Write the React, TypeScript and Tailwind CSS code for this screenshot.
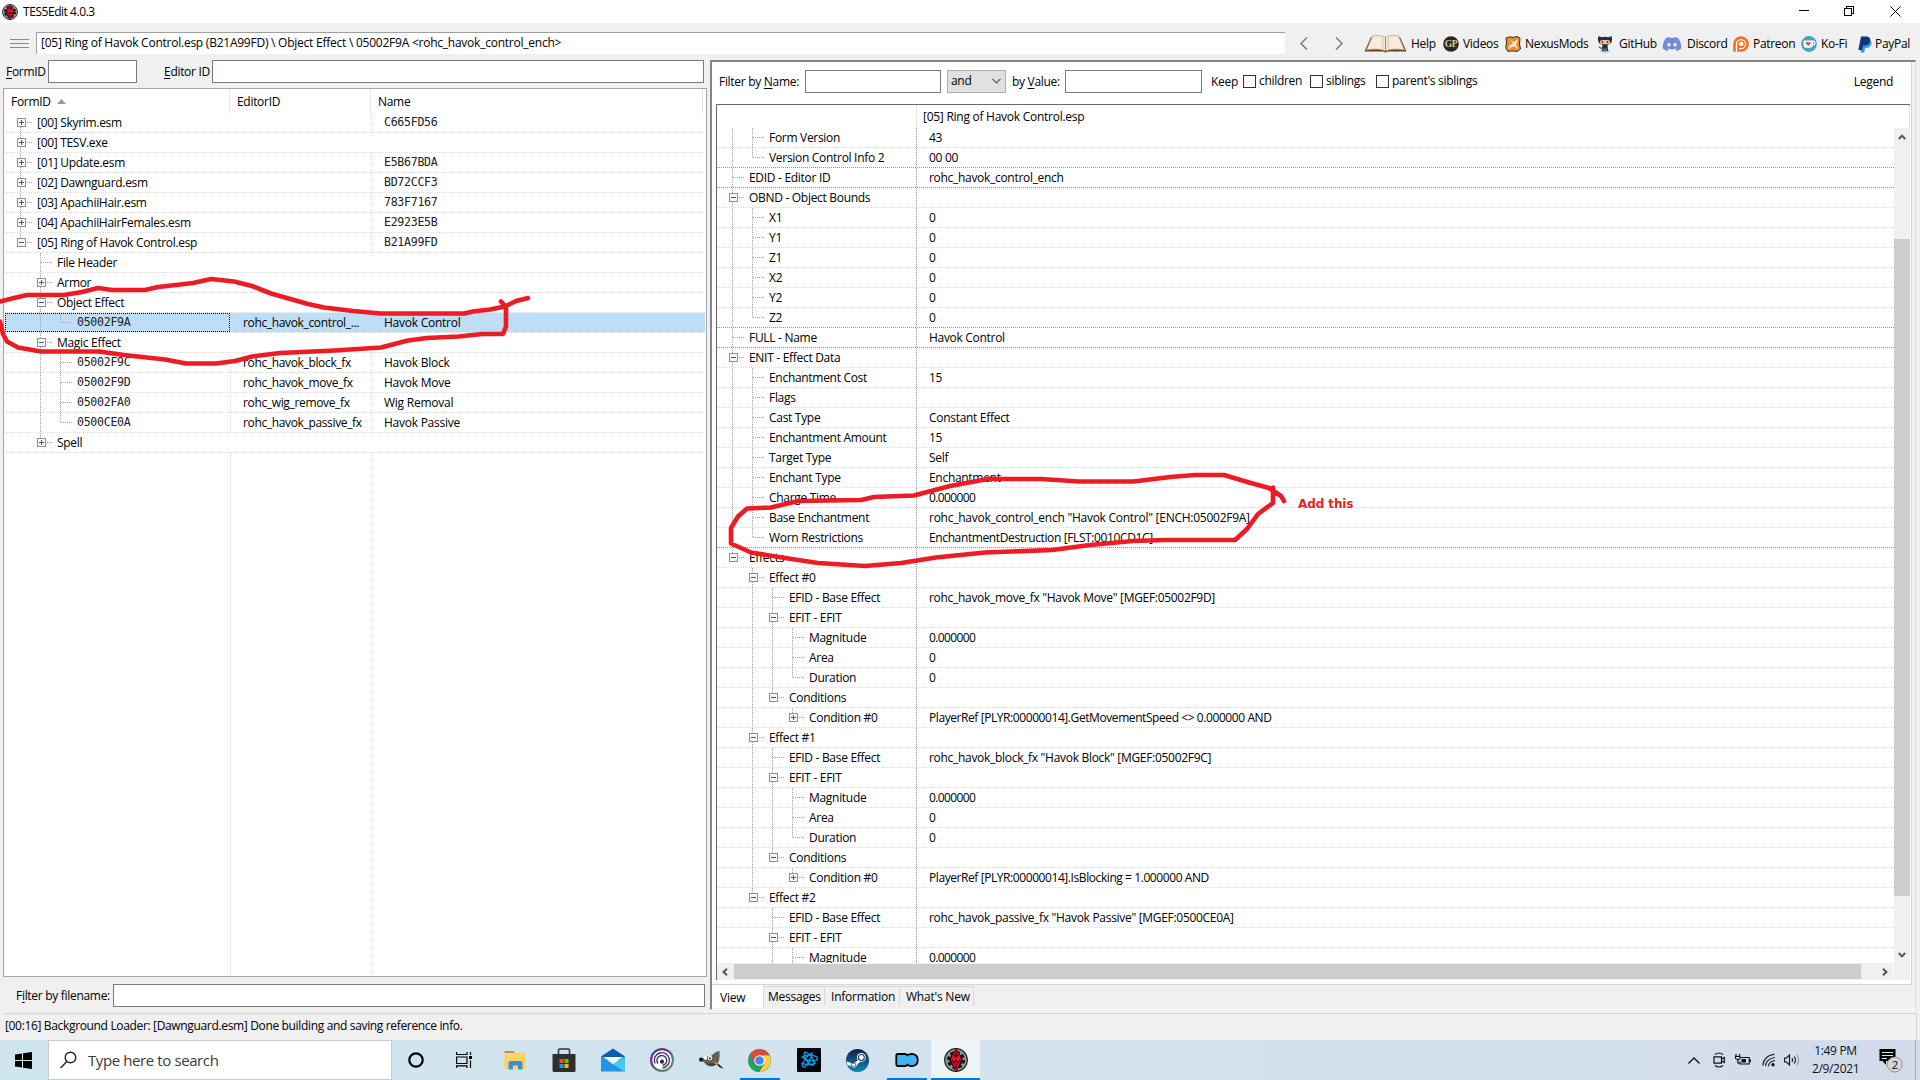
import type { ReactNode } from 'react';
import { FaDiscord } from 'react-icons/fa';

type Kind = 'leaf' | 'plus' | 'minus';

type TreeRow = {
  level: number;
  kind: Kind;
  label: string;
  value?: string;
  editor?: string;
  mono?: boolean;
  selected?: boolean;
  dark?: boolean;
};

const pluginRows: TreeRow[] = [
  { level: 0, kind: 'plus', label: '[00] Skyrim.esm', value: 'C665FD56' },
  { level: 0, kind: 'plus', label: '[00] TESV.exe' },
  { level: 0, kind: 'plus', label: '[01] Update.esm', value: 'E5B67BDA' },
  { level: 0, kind: 'plus', label: '[02] Dawnguard.esm', value: 'BD72CCF3' },
  { level: 0, kind: 'plus', label: '[03] ApachiiHair.esm', value: '783F7167' },
  { level: 0, kind: 'plus', label: '[04] ApachiiHairFemales.esm', value: 'E2923E5B' },
  { level: 0, kind: 'minus', label: '[05] Ring of Havok Control.esp', value: 'B21A99FD' },
  { level: 1, kind: 'leaf', label: 'File Header' },
  { level: 1, kind: 'plus', label: 'Armor' },
  { level: 1, kind: 'minus', label: 'Object Effect' },
  { level: 2, kind: 'leaf', label: '05002F9A', editor: 'rohc_havok_control_...', value: 'Havok Control', mono: true, selected: true },
  { level: 1, kind: 'minus', label: 'Magic Effect' },
  { level: 2, kind: 'leaf', label: '05002F9C', editor: 'rohc_havok_block_fx', value: 'Havok Block', mono: true },
  { level: 2, kind: 'leaf', label: '05002F9D', editor: 'rohc_havok_move_fx', value: 'Havok Move', mono: true },
  { level: 2, kind: 'leaf', label: '05002FA0', editor: 'rohc_wig_remove_fx', value: 'Wig Removal', mono: true },
  { level: 2, kind: 'leaf', label: '0500CE0A', editor: 'rohc_havok_passive_fx', value: 'Havok Passive', mono: true },
  { level: 1, kind: 'plus', label: 'Spell' },
];

const recordRows: TreeRow[] = [
  { level: 1, kind: 'leaf', label: 'Form Version', value: '43' },
  { level: 1, kind: 'leaf', label: 'Version Control Info 2', value: '00 00', dark: true },
  { level: 0, kind: 'leaf', label: 'EDID - Editor ID', value: 'rohc_havok_control_ench', dark: true },
  { level: 0, kind: 'minus', label: 'OBND - Object Bounds' },
  { level: 1, kind: 'leaf', label: 'X1', value: '0' },
  { level: 1, kind: 'leaf', label: 'Y1', value: '0' },
  { level: 1, kind: 'leaf', label: 'Z1', value: '0' },
  { level: 1, kind: 'leaf', label: 'X2', value: '0' },
  { level: 1, kind: 'leaf', label: 'Y2', value: '0' },
  { level: 1, kind: 'leaf', label: 'Z2', value: '0', dark: true },
  { level: 0, kind: 'leaf', label: 'FULL - Name', value: 'Havok Control', dark: true },
  { level: 0, kind: 'minus', label: 'ENIT - Effect Data' },
  { level: 1, kind: 'leaf', label: 'Enchantment Cost', value: '15' },
  { level: 1, kind: 'leaf', label: 'Flags' },
  { level: 1, kind: 'leaf', label: 'Cast Type', value: 'Constant Effect' },
  { level: 1, kind: 'leaf', label: 'Enchantment Amount', value: '15' },
  { level: 1, kind: 'leaf', label: 'Target Type', value: 'Self' },
  { level: 1, kind: 'leaf', label: 'Enchant Type', value: 'Enchantment' },
  { level: 1, kind: 'leaf', label: 'Charge Time', value: '0.000000' },
  { level: 1, kind: 'leaf', label: 'Base Enchantment', value: 'rohc_havok_control_ench "Havok Control" [ENCH:05002F9A]' },
  { level: 1, kind: 'leaf', label: 'Worn Restrictions', value: 'EnchantmentDestruction [FLST:0010CD1C]', dark: true },
  { level: 0, kind: 'minus', label: 'Effects' },
  { level: 1, kind: 'minus', label: 'Effect #0' },
  { level: 2, kind: 'leaf', label: 'EFID - Base Effect', value: 'rohc_havok_move_fx "Havok Move" [MGEF:05002F9D]' },
  { level: 2, kind: 'minus', label: 'EFIT - EFIT' },
  { level: 3, kind: 'leaf', label: 'Magnitude', value: '0.000000' },
  { level: 3, kind: 'leaf', label: 'Area', value: '0' },
  { level: 3, kind: 'leaf', label: 'Duration', value: '0' },
  { level: 2, kind: 'minus', label: 'Conditions' },
  { level: 3, kind: 'plus', label: 'Condition #0', value: 'PlayerRef [PLYR:00000014].GetMovementSpeed <> 0.000000 AND' },
  { level: 1, kind: 'minus', label: 'Effect #1' },
  { level: 2, kind: 'leaf', label: 'EFID - Base Effect', value: 'rohc_havok_block_fx "Havok Block" [MGEF:05002F9C]' },
  { level: 2, kind: 'minus', label: 'EFIT - EFIT' },
  { level: 3, kind: 'leaf', label: 'Magnitude', value: '0.000000' },
  { level: 3, kind: 'leaf', label: 'Area', value: '0' },
  { level: 3, kind: 'leaf', label: 'Duration', value: '0' },
  { level: 2, kind: 'minus', label: 'Conditions' },
  { level: 3, kind: 'plus', label: 'Condition #0', value: 'PlayerRef [PLYR:00000014].IsBlocking = 1.000000 AND' },
  { level: 1, kind: 'minus', label: 'Effect #2' },
  { level: 2, kind: 'leaf', label: 'EFID - Base Effect', value: 'rohc_havok_passive_fx "Havok Passive" [MGEF:0500CE0A]' },
  { level: 2, kind: 'minus', label: 'EFIT - EFIT' },
  { level: 3, kind: 'leaf', label: 'Magnitude', value: '0.000000' },
  { level: 3, kind: 'leaf', label: 'Area', value: '0' },
  { level: 2, kind: 'leaf', label: 'Conditions' },
];

const VISIBLE_RECORD_ROWS = 42;

// true when another node on the same level follows before the branch closes
const continues = (rows: TreeRow[], index: number, level: number) => {
  for (let i = index + 1; i < rows.length; i++) {
    if (rows[i].level < level) return false;
    if (rows[i].level === level) return true;
  }
  return false;
};

const valueTracking = (value?: string) => {
  if (!value) return '';
  if (/^[\d.]{4,}$/.test(value)) return 'tracking-[-0.6px]';
  if (value.startsWith('PlayerRef')) return 'tracking-[-0.42px]';
  if (value.startsWith('EnchantmentD')) return 'tracking-[-0.38px]';
  if (value.includes('ench "')) return 'tracking-[-0.26px]';
  return '';
};

const Guides = ({ rows, index, scrolled }: { rows: TreeRow[]; index: number; scrolled?: boolean }) => {
  const { level, kind } = rows[index];
  const first = index === 0 && !scrolled;
  return (
    <>
      {Array.from({ length: level + 1 }, (_, l) => {
        const more = continues(rows, index, l);
        const own = l === level;
        return (
          <svg key={l} className="h-5 w-5 shrink-0" viewBox="0 0 20 20" shapeRendering="crispEdges">
            {!own && more && <path d="M3.5 0V20" stroke="#a0a0a0" strokeDasharray="1 1" />}
            {own && (
              <>
                {!first && <path d="M3.5 0V10" stroke="#a0a0a0" strokeDasharray="1 1" />}
                {more && <path d="M3.5 10V20" stroke="#a0a0a0" strokeDasharray="1 1" />}
                <path d="M4 9.5H16" stroke="#a0a0a0" strokeDasharray="1 1" />
                {kind !== 'leaf' && (
                  <>
                    <rect x="0.5" y="5.5" width="8" height="8" fill="#f6f6f6" stroke="#919191" />
                    <path d="M2 9.5H7" stroke="#3c57a4" />
                    {kind === 'plus' && <path d="M4.5 7V12" stroke="#3c57a4" />}
                  </>
                )}
              </>
            )}
          </svg>
        );
      })}
    </>
  );
};

const dotsLight = 'bg-[repeating-linear-gradient(to_right,#dfdfdf_0_1px,transparent_1px_2px)]';
const dotsDark = 'bg-[repeating-linear-gradient(to_right,#959595_0_1px,transparent_1px_2px)]';
const vDotsLight = 'bg-[repeating-linear-gradient(to_bottom,#dfdfdf_0_1px,transparent_1px_2px)]';
const vDotsDark = 'bg-[repeating-linear-gradient(to_bottom,#959595_0_1px,transparent_1px_2px)]';

const PluginTree = () => (
  <div className="ml-[3px] flex h-[889px] w-[704px] flex-col border border-[#a3a6ad] bg-white">
    <div className="flex h-6 items-center">
      <div className="flex h-full w-[226px] items-center border-r border-[#e5e5e5] pt-0.5 pl-[7px]">
        FormID
        <svg className="mb-0.5 ml-[6px] h-[5px] w-[9px]" viewBox="0 0 9 5">
          <path d="M4.5 0L9 5H0Z" fill="#999" />
        </svg>
      </div>
      <div className="flex h-full w-[141px] items-center border-r border-[#e5e5e5] pt-0.5 pl-[7px]">EditorID</div>
      <div className="flex h-full w-[332px] items-center border-r border-[#e5e5e5] pt-0.5 pl-[7px]">Name</div>
    </div>
    {pluginRows.map((row, i) => (
      <div key={i} className="ml-px h-5 w-[700px]">
        <div className={`flex h-[19px] ${row.selected ? 'bg-[#bfddf5]' : ''}`}>
          <div className={`flex w-[225px] pl-3 ${row.selected ? 'outline-1 -outline-offset-1 outline-dotted outline-black' : ''}`}>
            <Guides rows={pluginRows} index={i} />
            <span
              className={
                row.mono ? 'font-[DejaVu_Sans_Mono,monospace] text-[11.6px] leading-[19px] text-[#222]' : 'leading-5'
              }
            >
              {row.label}
            </span>
          </div>
          <div className={`w-px ${row.editor ? vDotsLight : ''}`} />
          <div className="w-[140px] pl-3 leading-5 tracking-[-0.35px]">{row.editor}</div>
          <div className={`w-px ${row.value ? vDotsLight : ''}`} />
          <div
            className={
              row.level === 0
                ? 'pl-3 font-[DejaVu_Sans_Mono,monospace] text-[11.6px] leading-[19px] text-[#222]'
                : 'pl-3 leading-5 tracking-[-0.25px]'
            }
          >
            {row.value}
          </div>
        </div>
        <div className={`h-px ${dotsLight}`} />
      </div>
    ))}
    <div className="flex flex-1 pl-[226px]">
      <div className={`w-px ${vDotsLight}`} />
      <div className={`ml-[140px] w-px ${vDotsLight}`} />
    </div>
  </div>
);

const RecordTree = () => (
  <div className="ml-1 flex h-[876px] w-[1194px] flex-col border-t border-l border-[#696969]">
    <div className="flex h-[23px] shrink-0">
      <div className="w-[200px] border-r border-[#e5e5e5]" />
      <div className="flex-1 border-r border-[#e5e5e5] pt-px pl-1.5 leading-[22px] tracking-[-0.26px]">[05] Ring of Havok Control.esp</div>
    </div>
    <div className="flex h-[835px] shrink-0">
      <div className="h-full w-[1177px] overflow-hidden">
        {recordRows.slice(0, VISIBLE_RECORD_ROWS).map((row, i) => (
          <div key={i} className="h-5">
            <div className="flex h-[19px]">
              <div className="flex w-[199px] pl-3">
                <Guides rows={recordRows} index={i} scrolled />
                <span className="leading-5 whitespace-nowrap">{row.label}</span>
              </div>
              <div className={`h-5 w-px ${vDotsDark}`} />
              <div className={`pl-3 leading-5 whitespace-pre ${valueTracking(row.value)}`}>{row.value}</div>
            </div>
            <div className={`h-px ${row.dark ? dotsDark : dotsLight}`} />
          </div>
        ))}
      </div>
      <div className="flex w-4 flex-col items-center bg-[#f0f0f0]">
        <svg className="mt-1.5 h-[7px] w-2" viewBox="0 0 8 7">
          <path d="M0.8 5L4 1.6L7.2 5" fill="none" stroke="#555" strokeWidth="2" />
        </svg>
        <div className="mt-[98px] h-[657px] w-4 bg-[#cdcdcd]" />
        <svg className="mt-auto mb-[5px] h-[7px] w-2" viewBox="0 0 8 7">
          <path d="M0.8 2L4 5.4L7.2 2" fill="none" stroke="#555" strokeWidth="2" />
        </svg>
      </div>
    </div>
    <div className="flex h-[17px] items-stretch">
      <div className="flex w-[1176px] items-center bg-[#f0f0f0]">
        <div className="flex w-[17px] justify-center">
          <svg className="h-2 w-[7px]" viewBox="0 0 7 8">
            <path d="M5 0.8L1.6 4L5 7.2" fill="none" stroke="#555" strokeWidth="2" />
          </svg>
        </div>
        <div className="h-[15px] w-[1127px] bg-[#cdcdcd]" />
        <svg className="mr-[5px] ml-auto h-2 w-[7px]" viewBox="0 0 7 8">
          <path d="M2 0.8L5.4 4L2 7.2" fill="none" stroke="#555" strokeWidth="2" />
        </svg>
      </div>
      <div className="ml-px w-4 bg-[#f0f0f0]" />
    </div>
  </div>
);

const DragonLogo = ({ className }: { className: string }) => (
  <svg className={className} viewBox="0 0 24 24">
    <circle cx="12" cy="12" r="11.3" fill="#8f9898" stroke="#222" strokeWidth="1.2" />
    <circle cx="12" cy="12" r="7.6" fill="none" stroke="#111" strokeWidth="3" strokeDasharray="3.4 2.57" />
    <circle cx="12" cy="12" r="6.8" fill="#1c1c1c" />
    <path d="M12 0.5L13.8 4L16 7L17.500 12L15 17L12.500 23.500H11.500L9 17L6.500 12L8 7L10.200 4Z" fill="#e8112d" stroke="#2a0008" strokeWidth="0.8" />
    <path d="M12 3V9L9.500 6.500M12 9L14.500 6.500M8 12L10.500 15L12 12L13.500 15L16 12M12 16V21" fill="none" stroke="#3c0008" strokeWidth="1.1" />
  </svg>
);

const BookIcon = () => (
  <svg className="h-[18px] w-[43px]" viewBox="0 0 43 18">
    <path d="M7 2L0.500 16.500H19L21.500 17.500L24 16.500H42.500L36 2Z" fill="#6b3e22" />
    <path d="M8.500 1C13 0 19 0.500 21.500 2.500C24 0.500 30 0 34.500 1L40.500 15C34 13.500 25 14 21.500 16C18 14 9 13.500 2.500 15Z" fill="#f6ebdc" stroke="#b59a80" strokeWidth="0.7" />
    <path d="M21.500 2.500V16" stroke="#a98262" strokeWidth="1" />
    <path d="M18.500 2C19.500 6 19 11 18.500 14M24.500 2C23.500 6 24 11 24.500 14" fill="none" stroke="#e2cfb6" strokeWidth="1.500" />
  </svg>
);

const GpIcon = () => (
  <svg className="h-4 w-4" viewBox="0 0 16 16">
    <circle cx="8" cy="8" r="7.800" fill="#2b2723" />
    <text x="8" y="11.200" textAnchor="middle" fontSize="9.500" fontWeight="bold" letterSpacing="-0.300" fontFamily="Liberation Serif, serif" fill="#dccb98">
      GP
    </text>
  </svg>
);

const NexusIcon = () => (
  <svg className="h-4 w-4" viewBox="0 0 16 16">
    <path d="M1 2L5 0.800L8 1.500L12 0.500L15 2L14.500 8L15.500 13L12 15.500L7 14.800L3 15.500L0.800 12L1.500 7Z" fill="#e8912b" stroke="#3a2c1c" strokeWidth="1" />
    <path d="M3 3L7 5.500L8 8L5 9L3 13L7 11L9 10L13 13L11 9L13 3L9 6Z" fill="#fff2dc" />
  </svg>
);

const OctocatIcon = () => (
  <svg className="h-[18px] w-4" viewBox="0 0 16 18">
    <ellipse cx="8" cy="16" rx="5" ry="1.700" fill="#9ed3e4" />
    <path d="M1.500 1L4.500 2.200Q8 1.300 11.500 2.200L14.500 1Q15.500 4 14.800 6Q14 10 8 10Q2 10 1.200 6Q0.500 4 1.500 1Z" fill="#2b2b33" />
    <rect x="3" y="5" width="10" height="4.200" rx="2" fill="#f1c9ad" />
    <ellipse cx="5.500" cy="7" rx="0.900" ry="1.300" fill="#6b3b2c" />
    <ellipse cx="10.500" cy="7" rx="0.900" ry="1.300" fill="#6b3b2c" />
    <path d="M5.500 9.500H10.500L11 16H9.300V13.500H8.600V16.500H7.400V13.500H6.700V16H5Z" fill="#2b2b33" />
    <path d="M5 13Q2.500 14 2 11.500" fill="none" stroke="#2b2b33" />
  </svg>
);

const PatreonIcon = () => (
  <svg className="h-4 w-4" viewBox="0 0 16 16">
    <path d="M0.200 16V8A7.800 7.800 0 1 1 8 15.800H0.200Z" fill="#f96d1c" />
    <path d="M2.800 16V8.100A5.200 5.200 0 1 1 8 13.300H6.200V16Z" fill="#fff" />
    <path d="M4.200 16V8.100A3.900 3.900 0 1 1 8.100 12H6V16Z" fill="#f96d1c" />
    <circle cx="8.200" cy="8" r="2.300" fill="#fff" />
  </svg>
);

const KofiIcon = () => (
  <svg className="h-4 w-4" viewBox="0 0 16 16">
    <circle cx="8" cy="8" r="7.900" fill="#4aa0bf" />
    <path d="M2.500 4.500H12Q14.500 4.500 14.500 7T12 9.300Q11.500 11.700 9.500 11.700H4.500Q2.500 11.700 2.500 9.500Z" fill="#fff" />
    <path d="M12 6V8Q13.300 8 13.300 7T12 6Z" fill="#4aa0bf" />
    <path d="M7.200 10L4.800 7.600Q4.200 6.200 5.500 5.900Q6.500 5.700 7.200 6.700Q7.900 5.700 8.900 5.900Q10.200 6.200 9.600 7.600Z" fill="#ee4b4b" />
  </svg>
);

const PaypalIcon = () => (
  <svg className="h-[17px] w-[14px]" viewBox="0 0 14 17">
    <path d="M4.500 4H12Q14.500 6 13 9Q11.500 12 8 12H7L6.200 16.500H2.500Z" fill="#2aa0e0" />
    <path d="M3 0.500H9Q12.800 1 12.200 5Q11.200 9.500 6.500 9.500H5L4 14H0.300Z" fill="#123577" />
  </svg>
);

const toolbarLinks: { label: string; icon: ReactNode; cls: string; gap: string }[] = [
  { label: 'Help', icon: <BookIcon />, cls: 'w-[79px]', gap: 'w-[47px]' },
  { label: 'Videos', icon: <GpIcon />, cls: 'w-[62px]', gap: 'w-5' },
  { label: 'NexusMods', icon: <NexusIcon />, cls: 'w-[92px]', gap: 'w-5' },
  { label: 'GitHub', icon: <OctocatIcon />, cls: 'w-[65px]', gap: 'w-[22px]' },
  { label: 'Discord', icon: <FaDiscord className="h-5 w-5 text-[#7289da]" />, cls: 'w-[71px]', gap: 'w-[25px]' },
  { label: 'Patreon', icon: <PatreonIcon />, cls: 'w-[68px]', gap: 'w-5' },
  { label: 'Ko-Fi', icon: <KofiIcon />, cls: 'w-[57px]', gap: 'w-5' },
  { label: 'PayPal', icon: <PaypalIcon />, cls: 'w-[55px]', gap: 'w-[17px]' },
];

const TitleBar = () => (
  <div className="flex h-[23px] items-center bg-white pl-0.5">
    <DragonLogo className="h-4 w-4" />
    <span className="ml-[5px] tracking-[-0.45px]">TES5Edit 4.0.3</span>
    <div className="mr-[19px] ml-auto flex items-center gap-[35px]">
      <svg className="h-[11px] w-[11px]" viewBox="0 0 11 11" shapeRendering="crispEdges">
        <path d="M1 4.500H11" stroke="#000" />
      </svg>
      <svg className="h-[11px] w-[11px]" viewBox="0 0 11 11" fill="none" stroke="#000" shapeRendering="crispEdges">
        <path d="M0.500 2.500H7.500V9.500H0.500ZM2.500 2.500V0.500H9.500V7.500H7.500" />
      </svg>
      <svg className="h-[11px] w-[11px]" viewBox="0 0 11 11" stroke="#000">
        <path d="M0.500 0.500L10.500 10.500M10.500 0.500L0.500 10.500" />
      </svg>
    </div>
  </div>
);

const Toolbar = () => (
  <div className="flex h-[37px] items-start">
    <svg className="mt-[15px] ml-[10px] h-[11px] w-[19px]" viewBox="0 0 19 11" stroke="#8a8a8a" shapeRendering="crispEdges">
      <path d="M0 1.500H19M0 5.500H19M0 9.500H19" />
    </svg>
    <div className="mt-[9px] ml-[7px] h-[22px] w-[1249px] border-t border-l border-[#a0a0a0] bg-white pl-1 leading-[19px] tracking-[-0.24px]">
      [05] Ring of Havok Control.esp (B21A99FD) \ Object Effect \ 05002F9A &lt;rohc_havok_control_ench&gt;
    </div>
    <svg className="mt-3.5 ml-[15px] h-[13px] w-2" viewBox="0 0 8 13" fill="none" stroke="#7b7380" strokeWidth="1.400">
      <path d="M7 0.500L1 6.500L7 12.500" />
    </svg>
    <svg className="mt-3.5 ml-[27px] h-[13px] w-2" viewBox="0 0 8 13" fill="none" stroke="#7b7380" strokeWidth="1.400">
      <path d="M1 0.500L7 6.500L1 12.500" />
    </svg>
    <div className="mt-[10px] ml-[21px] flex h-[22px] items-center">
      {toolbarLinks.map((link) => (
        <div key={link.label} className={`flex shrink-0 items-center ${link.cls}`}>
          <div className={`shrink-0 ${link.gap}`}>{link.icon}</div>
          <span className="whitespace-nowrap">{link.label}</span>
        </div>
      ))}
    </div>
  </div>
);

const Check = ({ label, cls }: { label: string; cls: string }) => (
  <div className={`flex shrink-0 items-center gap-[3px] ${cls}`}>
    <div className="h-[13px] w-[13px] border border-[#333] bg-white" />
    <span className="whitespace-nowrap">{label}</span>
  </div>
);

const FilterBar = () => (
  <div className="flex h-[42px] items-start pt-[7px] pl-[7px]">
    <div className="flex h-6 w-full items-center">
      <span className="w-[86px] pt-0.5 whitespace-nowrap">
        Filter by <u className="underline-offset-2">N</u>ame:
      </span>
      <div className="h-[23px] w-[136px] border border-[#7a7a7a] bg-white" />
      <div className="ml-1.5 flex h-[23px] w-[59px] items-center justify-between border border-[#adadad] bg-[#e1e1e1] pr-1 pl-[3px]">
        and
        <svg className="h-[6px] w-[9px]" viewBox="0 0 9 6" fill="none" stroke="#555" strokeWidth="1.200">
          <path d="M0.500 0.800L4.500 4.800L8.500 0.800" />
        </svg>
      </div>
      <span className="ml-1.5 w-[53px] pt-0.5 whitespace-nowrap">
        by <u className="underline-offset-2">V</u>alue:
      </span>
      <div className="h-[23px] w-[137px] border border-[#7a7a7a] bg-white" />
      <span className="ml-[9px] w-8 pt-0.5">Keep</span>
      <Check label="children" cls="w-[67px]" />
      <Check label="siblings" cls="w-[66px]" />
      <Check label="parent's siblings" cls="w-[110px]" />
      <span className="mr-[18px] ml-auto pt-0.5">Legend</span>
    </div>
  </div>
);

const tabs = [
  { label: 'Messages', cls: 'w-[61px] pl-1' },
  { label: 'Information', cls: 'w-[75px] pl-1.5' },
  { label: "What's New", cls: 'w-[74px] pl-1.5' },
];

const Annotations = () => (
  <svg
    className="pointer-events-none absolute inset-0 h-[1080px] w-[1920px]"
    viewBox="0 0 1920 1080"
    fill="none"
    stroke="#ed1c24"
    strokeWidth="4.600"
    strokeLinecap="round"
    strokeLinejoin="round"
  >
    <path d="M0 301.500L14 298L27 295H64L82 292L98 288L112 290H145L158 287L176 285L193 283L211 279L234 281.500L252 286L271 293.500L308 304L324 307.500L353 311L381 313.500H464L473 311.500L490 309.500L505 306.500L516 301L528 298" />
    <path d="M501 301.500L506 307V326.500L503 334H482L459 336.500L427 338L408 340.500L381 347.500L335 350.500L280 353L252 356.500L235 361L216 363.500H186L165 359.500L124 355L99 351.500H41L18 347.500L7 341.500L3 334L0 321.500" />
    <path d="M1284 501L1281 496L1269 488L1249 482.500L1224 475H1195L1170 477L1146 480L1133 481.500H1079L1041 479H988L950 486L914 495.500L874 497L861 500L798 501L771 507.500L747 508.500L738 516.500L731 528V543.500L751 552.500L785 558L818 563L865 566L901 563L936 557.500L985 552.500L1052 550L1090 545L1133 541L1165 540H1235L1247 529L1258 514L1273 503V487.500" />
  </svg>
);

const SearchIcon = () => (
  <svg className="h-[18px] w-[17px]" viewBox="0 0 17 18" fill="none" stroke="#222" strokeWidth="1.400">
    <circle cx="10.500" cy="6.500" r="5.300" />
    <path d="M6.800 10.500L0.600 17" />
  </svg>
);

const taskIcons: { icon: ReactNode; open?: boolean; active?: boolean }[] = [
  {
    icon: (
      <svg className="mr-0.5 h-4 w-4" viewBox="0 0 16 16">
        <circle cx="8" cy="8" r="6.700" fill="none" stroke="#000" strokeWidth="2.200" />
      </svg>
    ),
  },
  {
    icon: (
      <svg className="mr-1 h-4 w-4" viewBox="0 0 16 16" fill="none" stroke="#000" strokeWidth="1.200">
        <path d="M0.600 0V2.500H11V0M0.600 5H11V11.500H0.600ZM0.600 16V13.800H11V16M14.500 0V3M14.500 8.500V16" />
        <path d="M13 4H16V7H13Z" fill="#000" stroke="none" />
      </svg>
    ),
  },
  {
    icon: (
      <svg className="h-6 w-6" viewBox="0 0 24 24">
        <path d="M1.500 3H10.500L12 5H1.500Z" fill="#d98f0b" />
        <path d="M1.500 6.500H11L12.500 4.500H22.500V21H1.500Z" fill="#fcd462" />
        <path d="M5.500 21.500V15Q5.500 13 7.500 13H17.500Q19.500 13 19.500 15V21.500H15V17.500H10V21.500Z" fill="#3d8fd9" />
      </svg>
    ),
  },
  {
    icon: (
      <svg className="h-6 w-6" viewBox="0 0 24 24">
        <path d="M6.500 6V2Q6.500 1 7.500 1H16.500Q17.500 1 17.500 2V6" fill="none" stroke="#333" strokeWidth="1.500" />
        <path d="M0.500 6H23.500V22.500Q23.500 24 22 24H2Q0.500 24 0.500 22.500Z" fill="#2f2f2f" />
        <path d="M7.500 11H11.500V15H7.500Z" fill="#f25022" />
        <path d="M12.500 11H16.500V15H12.500Z" fill="#7fba00" />
        <path d="M7.500 16H11.500V20H7.500Z" fill="#00a4ef" />
        <path d="M12.500 16H16.500V20H12.500Z" fill="#ffb900" />
      </svg>
    ),
  },
  {
    icon: (
      <svg className="h-6 w-6" viewBox="0 0 24 24">
        <path d="M0 8.500L12 0.500L24 8.500V13H0Z" fill="#0a5fae" />
        <path d="M0 8.500L24 23.500H0Z" fill="#1e96e4" />
        <path d="M24 8.500V23.500L11.800 16Z" fill="#45c8f8" />
        <path d="M2 9H22L12 16Z" fill="#f4f6f8" />
      </svg>
    ),
  },
  {
    icon: (
      <svg className="h-6 w-6" viewBox="0 0 24 24" fill="none">
        <defs>
          <linearGradient id="swirl" x1="0" y1="0" x2="1" y2="1">
            <stop offset="0" stopColor="#2f4fa8" />
            <stop offset="0.350" stopColor="#7a2b7d" />
            <stop offset="0.650" stopColor="#2f8c86" />
            <stop offset="1" stopColor="#c07a2a" />
          </linearGradient>
        </defs>
        <circle cx="12" cy="12" r="12" fill="url(#swirl)" />
        <circle cx="12" cy="12" r="9.800" fill="#fff" />
        <path d="M5 15.500A7.600 7.600 0 1 1 12.500 19.800M8 15.500A4.900 4.900 0 1 1 12.500 17.300" stroke="#3a3560" strokeWidth="1.400" />
        <circle cx="12" cy="13.700" r="2.100" fill="#2c2c50" />
      </svg>
    ),
  },
  {
    icon: (
      <svg className="h-6 w-6" viewBox="0 0 24 24">
        <path d="M2 10Q6 11 9 8L12 8L14 6L18 3.500L20.500 3Q21 8 20 13Q18 18 12 18.500Q7 18 5 14L0 13Z" fill="#645f57" />
        <path d="M7 15Q12 17 17 14L16 17Q11 19 7 15Z" fill="#3e3a34" />
        <circle cx="2" cy="11.500" r="2" fill="#151515" />
        <circle cx="6.500" cy="10" r="1.700" fill="#fff" />
        <circle cx="11" cy="10" r="2.200" fill="#fff" />
        <circle cx="11" cy="10.200" r="1" fill="#111" />
        <path d="M15 14L20 17.500" stroke="#d88732" strokeWidth="1.800" />
        <path d="M19 16L23.500 20L20 18.500Z" fill="#222" stroke="#222" />
      </svg>
    ),
  },
  {
    open: true,
    icon: (
      <svg className="h-[23px] w-[23px]" viewBox="0 0 24 24">
        <circle cx="12" cy="12" r="12" fill="#1ea362" />
        <path d="M12 12L17.200 15L12 24A12 12 0 0 0 22.400 6.400H12Z" fill="#ffcd40" />
        <path d="M1.600 6A12 12 0 0 1 22.400 6.500H12L6.800 15Z" fill="#dc4a3d" />
        <circle cx="12" cy="12" r="5.500" fill="#fff" />
        <circle cx="12" cy="12" r="4.500" fill="#4285f4" />
      </svg>
    ),
  },
  {
    icon: (
      <svg className="h-6 w-6" viewBox="0 0 24 24" fill="none" stroke="#109be8" strokeWidth="1.300">
        <rect width="24" height="24" rx="1" fill="#02060c" stroke="none" />
        <path d="M8 4Q14 6 17 13Q18 18 14 17Q8 13 7 6ZM5 9Q13 5 20 9Q22 12 17 13Q9 13 5 9ZM15 5Q14 13 8 19Q4 20 6 15Q9 8 15 5ZM4 15Q12 18 19 15" />
      </svg>
    ),
  },
  {
    icon: (
      <svg className="h-[23px] w-[23px]" viewBox="0 0 24 24">
        <defs>
          <linearGradient id="steam" x1="0" y1="0" x2="0" y2="1">
            <stop offset="0" stopColor="#10204c" />
            <stop offset="1" stopColor="#1387b8" />
          </linearGradient>
        </defs>
        <circle cx="12" cy="12" r="12" fill="url(#steam)" />
        <path d="M0.500 13L7.500 15.500L11.500 12.500L15 8L18 11L12.500 15.500L10 19Q7 20.500 5 17.500L1.500 17Z" fill="#fff" />
        <circle cx="16" cy="8.800" r="4.600" fill="#fff" />
        <circle cx="16" cy="8.800" r="3.100" fill="#fff" stroke="#17325f" strokeWidth="1.100" />
        <circle cx="8" cy="16.500" r="2.200" fill="none" stroke="#17568a" strokeWidth="0.900" />
      </svg>
    ),
  },
  {
    open: true,
    icon: (
      <svg className="h-4 w-6" viewBox="0 0 24 16">
        <path
          d="M2.500 2H10Q11.500 2 12.300 3.300Q14.500 1.800 17 1.800Q22.800 2.500 22.800 8T17 14.200Q14.500 14.200 12.300 12.700Q11.500 14 10 14H2.500Q1.300 14 1.300 12.500V3.500Q1.300 2 2.500 2Z"
          fill="#3db7ee"
          stroke="#000"
          strokeWidth="1.800"
        />
      </svg>
    ),
  },
  { active: true, icon: <DragonLogo className="h-6 w-6" /> },
];

const Taskbar = () => (
  <div className="flex h-10 bg-linear-to-r from-[#cfe6ee] via-[#d2e3ee] to-[#d3dbea] font-['Open_Sans',sans-serif]">
    <div className="flex w-12 items-center pl-[15px]">
      <svg className="h-[17px] w-[17px]" viewBox="0 0 17 17">
        <path d="M0 2.500L7 1.500V8H0ZM8 1.300L17 0V8H8ZM0 9H7V15.500L0 14.500ZM8 9H17V17L8 15.700Z" />
      </svg>
    </div>
    <div className="flex w-[344px] items-center border border-[#c8ccce] bg-white pl-[11px]">
      <SearchIcon />
      <span className="ml-[11px] text-[15px] tracking-[-0.4px] text-[#3a3a3a]">Type here to search</span>
    </div>
    <div className="flex">
      {taskIcons.map((task, i) => (
        <div key={i} className={`flex w-[49px] flex-col items-center ${task.active ? 'bg-[#edf4f8]' : ''}`}>
          <div className="flex h-[38px] items-center pt-0.5">{task.icon}</div>
          {task.open && <div className="h-0.5 w-10 bg-[#0078d7]" />}
          {task.active && <div className="h-0.5 w-full bg-[#0078d7]" />}
        </div>
      ))}
    </div>
    <div className="ml-auto flex items-center">
      <svg className="h-[7px] w-3" viewBox="0 0 12 7" fill="none" stroke="#111" strokeWidth="1.300">
        <path d="M0.500 6.500L6 1L11.500 6.500" />
      </svg>
      <svg className="ml-[13px] h-4 w-3" viewBox="0 0 12 16" fill="none" stroke="#111" strokeWidth="1.200">
        <path d="M1 4.800H8.500V11.200H1ZM8.500 7L11.300 5.500V10.500L8.500 9M2 2.500Q6 -0.500 10 2.500M2 13.500Q6 16.500 10 13.500" />
      </svg>
      <svg className="ml-[10px] h-3 w-4" viewBox="0 0 16 12" fill="none" stroke="#111" strokeWidth="1.200">
        <path d="M6 3.500H14.200V10H5V7.500M15.500 5.500V8M1 0V2.500M4.500 0V2.500M0.500 2.500H5V4Q5 5.500 2.800 5.500T0.500 4ZM2.800 5.500V9H5" />
        <path d="M6.500 5H11V8.500H6.500Z" fill="#111" stroke="none" />
      </svg>
      <svg className="ml-[11px] h-[14px] w-[14px]" viewBox="0 0 14 14" fill="none" stroke="#222" strokeWidth="1.200">
        <path d="M0.800 12.500Q1.500 3 12.500 1.200M3.500 13Q4 6 12.800 4.500M6.300 13.300Q7 8.500 13 7.500" />
        <circle cx="11" cy="11.800" r="1.700" fill="#111" stroke="none" />
      </svg>
      <svg className="ml-2 h-[14px] w-4" viewBox="0 0 16 14" fill="none" stroke="#111" strokeWidth="1.100">
        <path d="M0.600 5H2.500L5.500 2V12L2.500 9H0.600ZM8 5Q9.200 7 8 9M10.300 3.500Q12.500 7 10.300 10.500" />
        <path d="M12.800 1.800Q16.500 7 12.800 12.200" stroke="#999" />
      </svg>
      <div className="ml-3 w-[47px] text-center text-[12px] leading-[18px] tracking-[-0.35px] whitespace-nowrap text-[#111]">
        <div>1:49 PM</div>
        <div>2/9/2021</div>
      </div>
      <svg className="ml-[20px] h-[26px] w-6" viewBox="0 0 24 26">
        <path d="M0.500 2H16.500V14H7V18L3.500 14H0.500Z" fill="#000" />
        <path d="M3 5.500H14M3 8.500H14M3 11.500H8" stroke="#dde6ee" />
        <circle cx="15.800" cy="17.500" r="7.500" fill="#d4d6da" stroke="#888" strokeWidth="0.900" />
        <text x="15.800" y="21.500" textAnchor="middle" fontSize="11.500" fill="#111">
          2
        </text>
      </svg>
      <div className="ml-3 h-10 w-[5px] border-l border-[#9ea9b8]" />
    </div>
  </div>
);

const App = () => (
  <div className="relative flex h-[1080px] w-[1920px] flex-col overflow-hidden bg-[#f0f0f0] font-['Open_Sans',sans-serif] text-[12px] leading-4 tracking-[-0.3px] text-black">
    <TitleBar />
    <Toolbar />
    <div className="flex h-[953px]">
      <div className="flex w-[710px] flex-col">
        <div className="flex h-7 items-start pl-1.5">
          <div className="flex h-[23px] items-center">
            <span className="w-[42px]">
              <u className="underline-offset-2">F</u>ormID
            </span>
            <div className="h-[23px] w-[89px] border border-[#7a7a7a] bg-white" />
            <span className="ml-[27px] w-12 whitespace-nowrap">
              <u className="underline-offset-2">E</u>ditor ID
            </span>
            <div className="h-[23px] w-[492px] border border-[#7a7a7a] bg-white" />
          </div>
        </div>
        <PluginTree />
        <div className="flex items-center pt-[7px] pl-4">
          <span className="w-[97px] whitespace-nowrap">
            F<u className="underline-offset-2">i</u>lter by filename:
          </span>
          <div className="h-[23px] w-[592px] border border-[#7a7a7a] bg-white" />
        </div>
      </div>
      <div className="flex h-[950px] w-[1206px] flex-col border-t-2 border-r border-b border-l-2 border-t-[#858585] border-r-[#dcdcdc] border-b-white border-l-[#858585]">
        <div className="mr-[3px] h-[923px] border-r border-b border-[#d5d5d5] bg-white">
          <FilterBar />
          <RecordTree />
        </div>
        <div className="flex items-start tracking-[-0.22px]">
          <div className="h-[23px] w-[52px] border-r border-[#d9d9d9] bg-white pl-2 leading-[25px]">View</div>
          {tabs.map((tab) => (
            <div key={tab.label} className={`mt-px h-5 border-t border-r border-[#d9d9d9] leading-[19px] whitespace-nowrap ${tab.cls}`}>
              {tab.label}
            </div>
          ))}
        </div>
      </div>
    </div>
    <div className="ml-[3px] h-[27px] w-[1914px] border-t border-r border-[#d4d4d4] pl-0.5 leading-6 tracking-[-0.34px]">
      [00:16] Background Loader: [Dawnguard.esm] Done building and saving reference info.
    </div>
    <Taskbar />
    <Annotations />
    <div className="absolute top-[496px] left-[1298px] font-['DejaVu_Sans',sans-serif] text-[12px] font-bold tracking-[-0.1px] text-[#ed1c24]">
      Add this
    </div>
  </div>
);

export default App;
